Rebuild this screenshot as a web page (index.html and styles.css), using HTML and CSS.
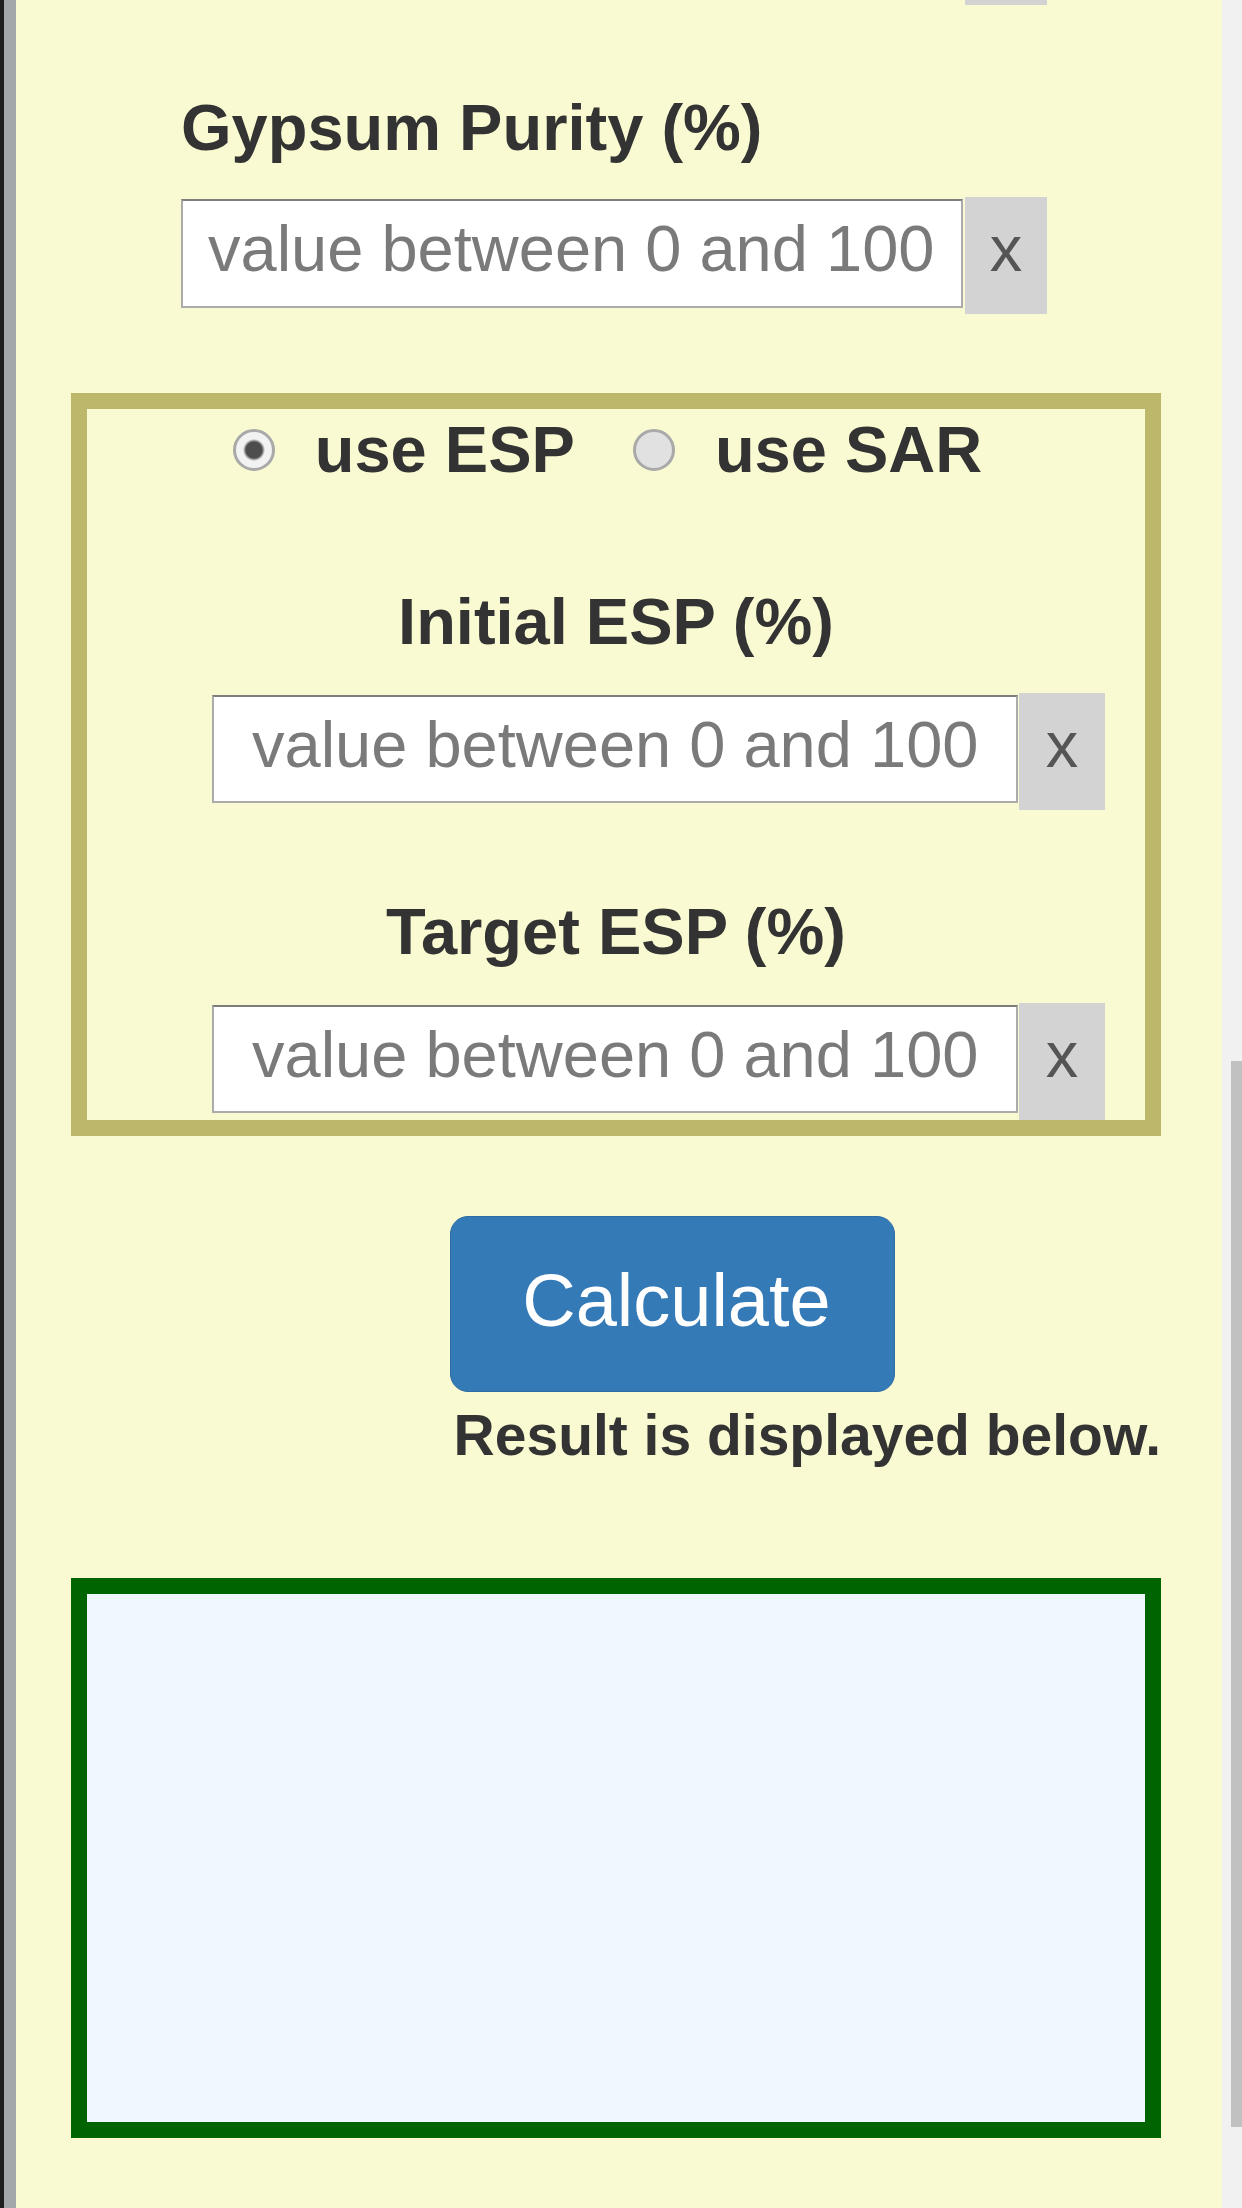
FILE: index.html
```html
<!DOCTYPE html>
<html lang="en">
<head>
<meta charset="utf-8">
<title>Gypsum Requirement</title>
<link rel="stylesheet" href="styles.css">
</head>
<body>
<div class="frame">
  <div class="edge"></div>
  <main class="page">
    <div class="content">
      <div class="prev-x"></div>

      <section class="gypsum">
        <div class="label">Gypsum Purity (%)</div>
        <div class="group">
          <div class="field field-wide"><span>value between 0 and 100</span></div>
          <div class="clear">x</div>
        </div>
      </section>

      <section class="panel">
        <div class="mode">
          <div class="opt"><span class="radio on"></span><span>use ESP</span></div>
          <div class="opt"><span class="radio off"></span><span>use SAR</span></div>
        </div>

        <div class="label esp-label first">Initial ESP (%)</div>
        <div class="group esp-group">
          <div class="field field-esp"><span>value between 0 and 100</span></div>
          <div class="clear clear-esp">x</div>
        </div>

        <div class="label esp-label second">Target ESP (%)</div>
        <div class="group esp-group">
          <div class="field field-esp"><span>value between 0 and 100</span></div>
          <div class="clear clear-esp">x</div>
        </div>
      </section>

      <button class="calc" type="button">Calculate</button>
      <div class="note">Result is displayed below.</div>

      <div class="result"></div>
    </div>
  </main>
  <div class="scrollbar"><div class="thumb"></div></div>
</div>
</body>
</html>
```

FILE: styles.css
```css
html, body {
  margin: 0;
  padding: 0;
  height: 2208px;
  overflow: hidden;
}

.frame {
  display: flex;
  height: 2208px;
}

.edge {
  width: 12px;
  border-left: 4px solid #1e1e1e;
  background: #a4a7aa;
}

.page {
  flex: 1;
  background: #fafad2;
  font-family: "Liberation Sans", Arial, Helvetica, sans-serif;
  color: #333;
}

.scrollbar {
  width: 20px;
  background: #f1f1f1;
  padding-top: 1061px;
  display: flex;
  flex-direction: column;
  align-items: flex-end;
  box-sizing: border-box;
}

.thumb {
  width: 11px;
  height: 1066px;
  background: #c1c1c1;
}

.content {
  margin-left: 55px;
  width: 1090px;
}

.prev-x {
  margin-left: 894px;
  width: 82px;
  height: 5px;
  background: #d3d3d3;
}

.gypsum {
  margin-left: 110px;
  margin-top: 86px;
}

.label {
  font-weight: bold;
  font-size: 65px;
  line-height: 74px;
}

.group {
  display: flex;
  align-items: flex-start;
  margin-top: 32px;
}

.field {
  box-sizing: border-box;
  height: 109px;
  margin-top: 2px;
  border: 2px solid #ababab;
  border-top-color: #7d7d7d;
  background: #fff;
  padding-left: 25px;
  padding-bottom: 11px;
  font-size: 65px;
  color: #7a7a7a;
  display: flex;
  align-items: center;
  white-space: nowrap;
  overflow: hidden;
}

.field-wide {
  width: 782px;
}

.clear {
  box-sizing: border-box;
  width: 82px;
  height: 117px;
  margin-left: 2px;
  padding-bottom: 15px;
  background: #d3d3d3;
  color: #555;
  font-size: 65px;
  display: flex;
  align-items: center;
  justify-content: center;
}

.panel {
  margin-top: 79px;
  border: 16px solid #bdb76b;
}

.mode {
  display: flex;
  justify-content: center;
  align-items: center;
  padding-top: 5px;
  padding-right: 17px;
  font-weight: bold;
  font-size: 65px;
  line-height: 72px;
}

.opt {
  display: flex;
  align-items: center;
}

.opt + .opt {
  margin-left: 58px;
}

.radio {
  box-sizing: border-box;
  width: 42px;
  height: 42px;
  border-radius: 50%;
  border: 3px solid #a9a9a9;
  margin-right: 40px;
}

.radio.on {
  background: radial-gradient(circle, #4d4d4d 0, #4d4d4d 8px, #f2f2f2 11px);
}

.radio.off {
  background: #e1e1e1;
}

.esp-label {
  text-align: center;
}

.esp-label.first {
  margin-top: 99px;
}

.esp-label.second {
  margin-top: 85px;
}

.esp-group {
  margin-left: 125px;
  margin-top: 34px;
}

.field-esp {
  width: 806px;
  height: 108px;
  padding-left: 38px;
  padding-bottom: 10px;
}

.clear-esp {
  width: 86px;
  margin-left: 1px;
}

.calc {
  display: flex;
  align-items: center;
  justify-content: center;
  box-sizing: border-box;
  margin: 80px 0 0 379px;
  width: 445px;
  height: 176px;
  padding: 0 0 8px 8px;
  border: 1px solid #2e6da4;
  border-radius: 18px;
  background: #337ab7;
  color: #fff;
  font-family: "Liberation Sans", Arial, Helvetica, sans-serif;
  font-size: 74px;
}

.note {
  margin-top: 11px;
  text-align: right;
  font-weight: bold;
  font-size: 57px;
  line-height: 64px;
}

.result {
  margin-top: 111px;
  box-sizing: border-box;
  height: 560px;
  border: 16px solid #006400;
  background: #f0f8ff;
}
```
